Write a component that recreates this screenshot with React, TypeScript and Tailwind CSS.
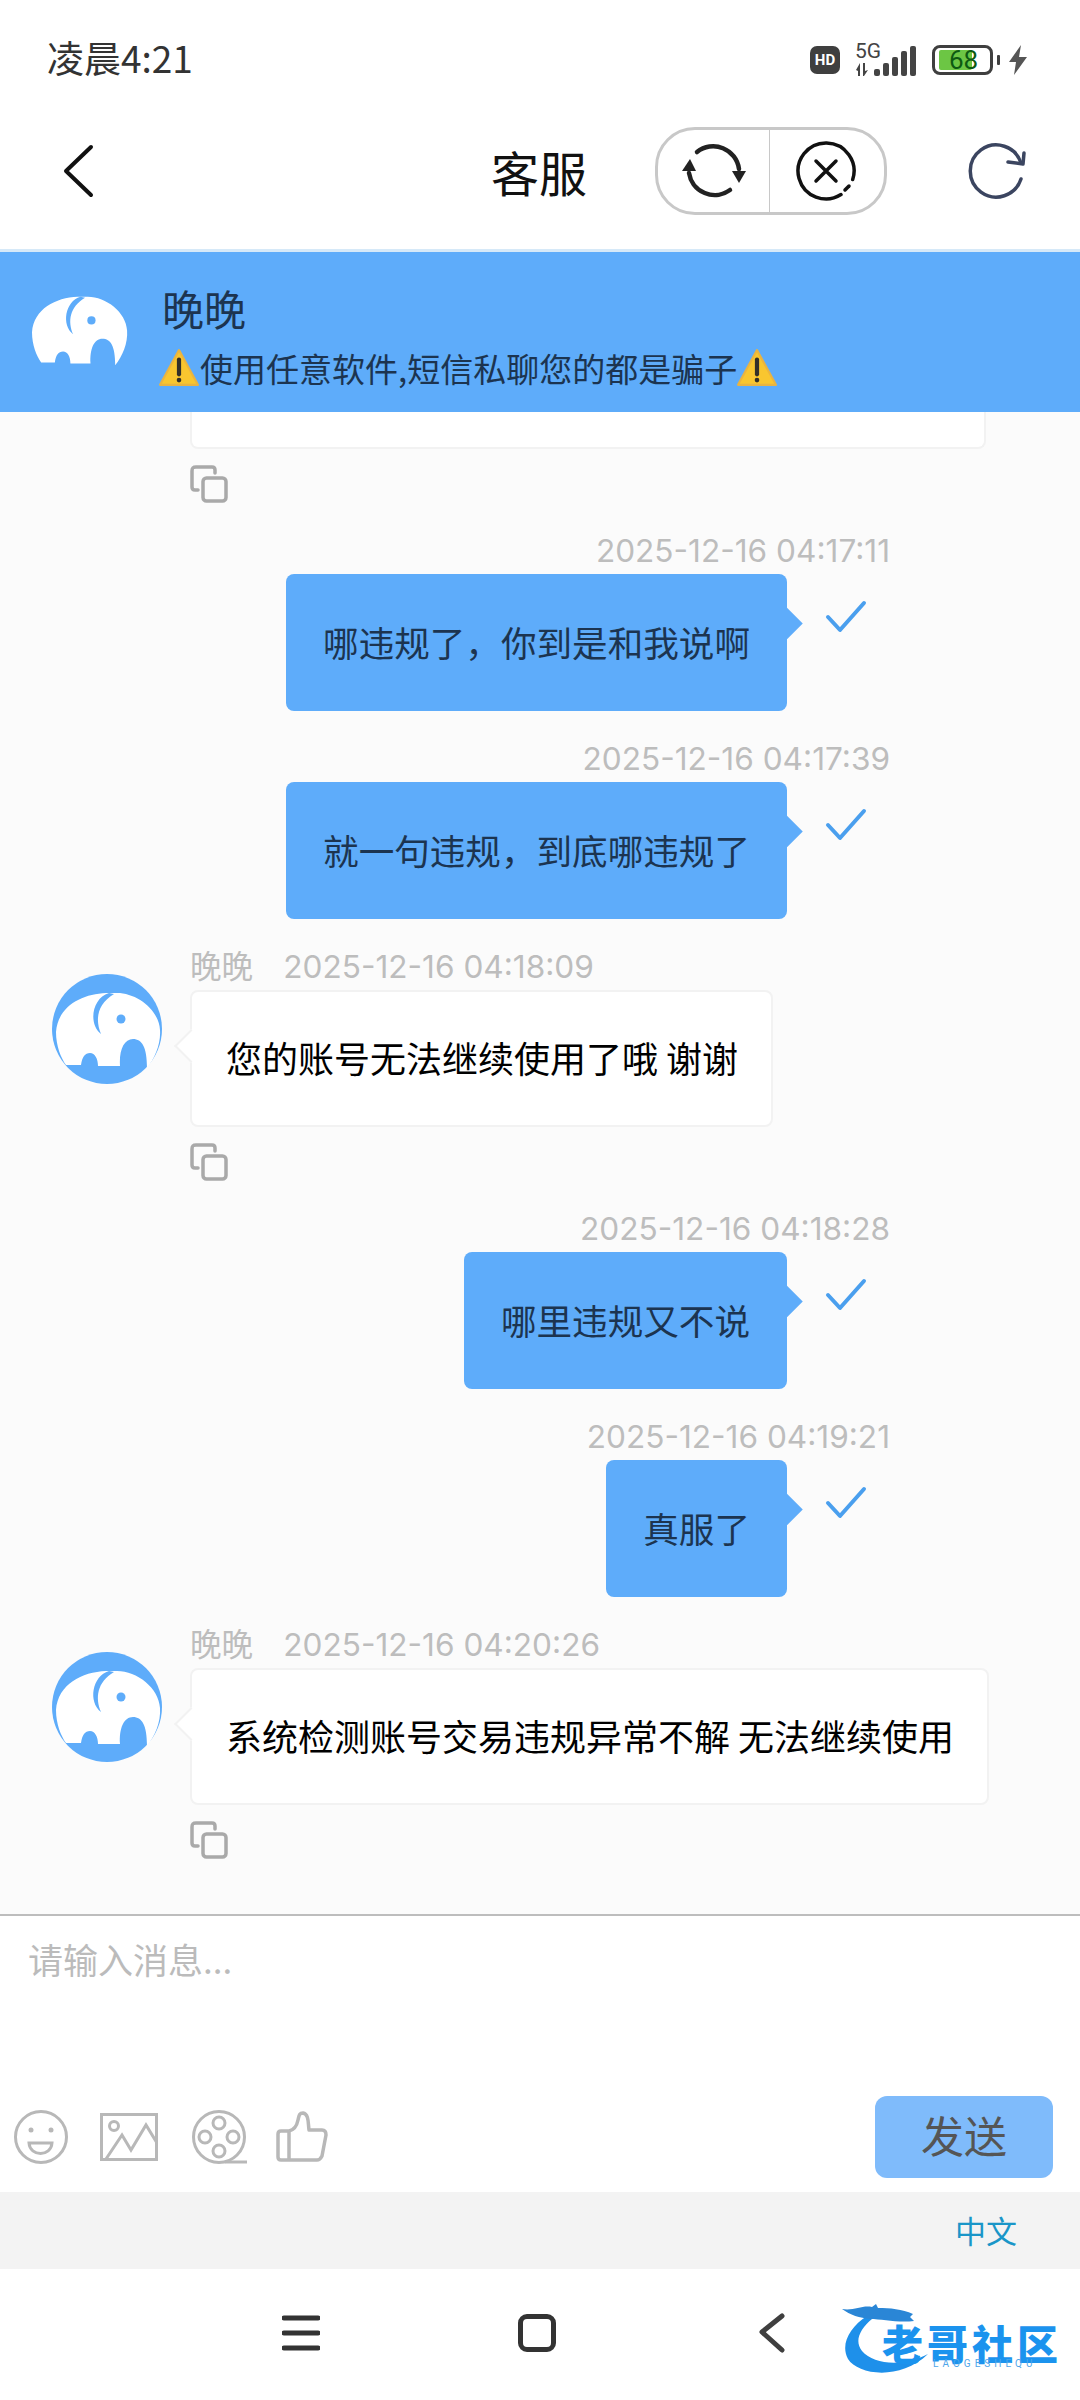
import { FC } from 'react';

const cjk = "font-['Noto_Sans_CJK_SC',sans-serif]";
const stamp = "font-['Inter','Noto_Sans_CJK_SC',sans-serif] text-[31.6px] leading-[32px] text-[#bdbdbd]";

const ElephantBody = () => (
  <path d="M54 19C30 20 6 32 4 58C4 72 9 84 14 91L29 91C30 83 33 79 38 79C43 79 46 85 46 92L68 92C67 76 72 65 81 65C90 65 95 73 95 94C103 84 109 70 108 56C107 36 85 19 65 19Z" fill="#fff" />
);

const ElephantFace = () => (
  <>
    <path d="M57 19C40 24 36 50 49 60C43 46 45 30 62 20Z" fill="#5eacfa" />
    <circle cx="69" cy="45" r="4.5" fill="#5eacfa" />
  </>
);

const Avatar = () => (
  <svg width="110" height="110" viewBox="0 0 110 110" className="shrink-0 mt-[23px]">
    <circle cx="55" cy="55" r="55" fill="#5eacfa" />
    <ElephantBody />
    <ElephantFace />
  </svg>
);

const Warning = () => (
  <svg width="40" height="40" viewBox="0 0 38 38" className="shrink-0">
    <path d="M19 2L37 35H1Z" fill="#f9c62f" stroke="#eab440" strokeWidth="2" strokeLinejoin="round" />
    <path d="M19 11V25" stroke="#33302a" strokeWidth="4" strokeLinecap="round" />
    <circle cx="19" cy="30.5" r="2.2" fill="#33302a" />
  </svg>
);

const Copy = () => (
  <svg width="38" height="38" viewBox="0 0 38 38" fill="none" stroke="#a9a9a9" strokeWidth="3.5" className="mt-[16px] block">
    <path d="M8 25H5C3 25 2 24 2 22V6C2 3 3 2 6 2H22C24 2 25 3 25 5V8" strokeLinecap="round" />
    <rect x="13" y="13" width="23" height="23" rx="3.5" />
  </svg>
);

const Right: FC<{ time: string; text: string }> = ({ time, text }) => (
  <div className="flex flex-col items-end mt-[32px] pr-[190px]">
    <div className={stamp}>{time}</div>
    <div className="flex mt-[7px]">
      <div className="relative bg-[#5eacfa] rounded-[8px] px-[37px] pt-[45px] pb-[47px] text-[35.6px] leading-[45px] text-[#1c3450] whitespace-nowrap">
        {text}
        <div className="absolute right-[-11px] top-[38px] w-[23px] h-[23px] rotate-45 bg-[#5eacfa]" />
      </div>
      <div className="w-[103px] pl-[38px] pt-[26px]">
        <svg width="42" height="34" viewBox="0 0 42 34" fill="none" stroke="#4a9fee" strokeWidth="4" strokeLinecap="round" strokeLinejoin="round">
          <path d="M3 17L15 30L39 3" />
        </svg>
      </div>
    </div>
  </div>
);

const Left: FC<{ time: string; text: string }> = ({ time, text }) => (
  <div className="flex mt-[32px] pl-[52px] gap-[28px]">
    <Avatar />
    <div className="flex flex-col items-start">
      <div className={`${stamp} flex gap-[30px]`}>
        <span>晚晚</span>
        <span>{time}</span>
      </div>
      <div className="relative mt-[7px] bg-white border-2 border-[#f2f2f2] rounded-[8px] pl-[34px] pr-[33px] pt-[43px] pb-[45px] text-[36px] leading-[45px] text-black whitespace-nowrap">
        {text}
        <div className="absolute left-[-13px] top-[42px] w-[24px] h-[24px] rotate-45 bg-white border-l-2 border-b-2 border-[#f2f2f2]" />
      </div>
      <Copy />
    </div>
  </div>
);

export default function App() {
  return (
    <div className={`w-[1080px] h-[2400px] bg-white overflow-hidden flex flex-col ${cjk}`}>
      {/* status bar */}
      <div className="h-[110px] flex items-start pt-[38px] shrink-0 relative">
        <span className="ml-[47px] text-[37px] leading-[38px] text-[#333]">凌晨4:21</span>
        <div className="ml-auto flex items-center mt-[7px] mr-[52px]">
          <div className="w-[30px] h-[28px] rounded-[7px] bg-[#3f3f3f] text-white text-[15px] font-bold flex items-center justify-center font-['Roboto',sans-serif]">HD</div>
          <div className="ml-[15px] relative w-[66px] h-[30px]">
            <span className="absolute left-0 top-[-3px] text-[21px] leading-[18px] text-[#444] font-['Roboto',sans-serif]">5G</span>
            <svg width="66" height="32" viewBox="0 0 66 32" className="absolute left-0 top-0" fill="#444">
              <path d="M1 25L5 18V31H3V26ZM8 18H10V26L13 25L9 31H8Z" />
              <rect x="19" y="24" width="6" height="7" rx="2" />
              <rect x="28" y="18" width="6" height="13" rx="2" />
              <rect x="37" y="12" width="6" height="19" rx="2" />
              <rect x="46" y="6" width="6" height="25" rx="2" />
              <rect x="55" y="1" width="6" height="30" rx="2" />
            </svg>
          </div>
          <div className="ml-[11px] relative w-[61px] h-[30px] border-[3px] border-[#3f3f3f] rounded-[8px] flex items-center">
            <div className="ml-[4px] w-[33px] h-[20px] rounded-[2px] bg-[#6cc644]" />
            <span className="absolute left-[14px] top-[-3px] text-[26px] leading-[30px] text-[#0d5a12] font-['Roboto',sans-serif]">68</span>
          </div>
          <div className="ml-[4px] w-[3px] h-[10px] rounded-[1px] bg-[#3f3f3f]" />
          <svg width="20" height="30" viewBox="0 0 20 30" fill="#555" className="ml-[8px]">
            <path d="M13 0L1 17H8L6 30L19 12H11Z" />
          </svg>
        </div>
      </div>

      {/* header */}
      <div className="h-[142px] shrink-0 border-b-[3px] border-[#d6e9f8] flex items-center pb-[17px]">
        <svg width="36" height="54" viewBox="0 0 36 54" fill="none" stroke="#111" strokeWidth="4" strokeLinecap="round" strokeLinejoin="round" className="ml-[60px]">
          <path d="M31 3L6 27L31 51" />
        </svg>
        <span className="ml-[395px] w-[96px] text-[48px] leading-[60px] text-[#111] whitespace-nowrap">客服</span>
        <div className="ml-[68px] w-[232px] h-[88px] rounded-[40px] border-[3px] border-[#c8c8c8] flex">
          <div className="w-[112px] border-r border-[#c8c8c8] flex items-center justify-center">
            <svg width="68" height="68" viewBox="0 0 68 68" fill="none" stroke="#222" strokeWidth="4.5" strokeLinecap="round">
              <path d="M17 15A26 26 0 0 1 59 32" />
              <path d="M50 53A26 26 0 0 1 9 36" />
              <path d="M52 34H66L59 46Z" fill="#222" stroke="none" />
              <path d="M2 34H16L10 22Z" fill="#222" stroke="none" />
            </svg>
          </div>
          <div className="flex-1 flex items-center justify-center pr-[2px]">
            <svg width="64" height="64" viewBox="0 0 64 64" fill="none" stroke="#111" strokeWidth="3.5" strokeLinecap="round">
              <path d="M58.7 40.5A28 28 0 1 0 47 55.6" />
              <path d="M51 51L55 47" />
              <path d="M22 22L42 42M42 22L22 42" />
            </svg>
          </div>
        </div>
        <svg width="64" height="64" viewBox="0 0 64 64" fill="none" stroke="#3b4560" strokeWidth="3.5" strokeLinecap="round" strokeLinejoin="round" className="ml-[77px]">
          <path d="M57 24A26 26 0 1 0 57 40" />
          <path d="M60 14L59 25L44 23" />
        </svg>
      </div>

      {/* banner */}
      <div className="h-[160px] shrink-0 bg-[#5eacfa] flex items-center pl-[32px]">
        <svg width="96" height="70" viewBox="4 19 105 75" className="mt-[-2px]">
          <ElephantBody />
          <ElephantFace />
        </svg>
        <div className="ml-[34px] text-[#1c3450] mt-[8px]">
          <div className="text-[42px] leading-[50px]">晚晚</div>
          <div className="mt-[13px] flex items-center text-[33px] leading-[44px] whitespace-nowrap ml-[-3px]">
            <Warning />
            <span className="ml-[1px]">使用任意软件,短信私聊您的都是骗子</span>
            <Warning />
          </div>
        </div>
      </div>

      {/* messages */}
      <div className="h-[1502px] shrink-0 bg-[#fbfbfb] overflow-hidden">
        <div className="ml-[190px] w-[796px] h-[37px] bg-white border-2 border-t-0 border-[#f2f2f2] rounded-b-[8px]" />
        <div className="ml-[190px]">
          <Copy />
        </div>
        <Right time="2025-12-16 04:17:11" text="哪违规了，你到是和我说啊" />
        <Right time="2025-12-16 04:17:39" text="就一句违规，到底哪违规了" />
        <Left time="2025-12-16 04:18:09" text="您的账号无法继续使用了哦 谢谢" />
        <Right time="2025-12-16 04:18:28" text="哪里违规又不说" />
        <Right time="2025-12-16 04:19:21" text="真服了" />
        <Left time="2025-12-16 04:20:26" text="系统检测账号交易违规异常不解 无法继续使用" />
      </div>

      {/* input */}
      <div className="h-[278px] shrink-0 border-t-2 border-[#bdbdbd] flex flex-col justify-between pb-[14px]">
        <div className="pl-[28px] pt-[23px] text-[35px] leading-[40px] text-[#bbbbbb]">请输入消息...</div>
        <div className="flex items-center pl-[14px] pr-[27px]">
          <svg width="54" height="54" viewBox="0 0 54 54" fill="none" stroke="#b8b8b8" strokeWidth="3">
            <circle cx="27" cy="27" r="25.5" />
            <circle cx="17" cy="20" r="2.5" fill="#b8b8b8" stroke="none" />
            <circle cx="37" cy="20" r="2.5" fill="#b8b8b8" stroke="none" />
            <path d="M15 33H38C37 47 16 47 15 33Z" />
          </svg>
          <svg width="58" height="48" viewBox="0 0 58 48" fill="none" stroke="#b8b8b8" strokeWidth="3" className="ml-[32px]">
            <rect x="1.5" y="1.5" width="55" height="45" />
            <circle cx="14" cy="13" r="4.5" />
            <path d="M6 46L22 22L31 37L46 12L57 30" />
          </svg>
          <svg width="56" height="54" viewBox="0 0 56 54" fill="none" stroke="#b8b8b8" strokeWidth="3" className="ml-[34px]">
            <circle cx="27" cy="27" r="25.5" />
            <circle cx="27" cy="13" r="6" />
            <circle cx="27" cy="41" r="6" />
            <circle cx="13" cy="27" r="6" />
            <circle cx="41" cy="27" r="6" />
            <path d="M33 52H55" />
          </svg>
          <svg width="52" height="52" viewBox="0 0 52 52" fill="none" stroke="#b8b8b8" strokeWidth="3.5" strokeLinejoin="round" className="ml-[28px]">
            <path d="M13 20H5C3 20 2 21 2 23V46C2 48 3 49 5 49H41C44 49 45 47 46 45L50 24C50 21 49 19 46 19H33C32 12 33 3 27 2C23 2 23 5 22 9C21 14 18 19 13 20ZM13 20V49" />
          </svg>
          <div className="ml-auto w-[178px] h-[82px] rounded-[12px] bg-[#7fbbfb] text-[43px] leading-[76px] pb-[7px] text-[#555] flex items-center justify-center">发送</div>
        </div>
      </div>

      {/* language bar */}
      <div className="h-[77px] shrink-0 bg-[#f3f3f3] flex items-center justify-end pr-[63px] text-[31px] text-[#1a96c8]">中文</div>

      {/* nav */}
      <div className="flex-1 relative flex items-center pb-[4px]">
        <svg width="38" height="38" viewBox="0 0 38 38" stroke="#333" strokeWidth="5" strokeLinecap="round" className="ml-[282px]">
          <path d="M2 4H36M2 19H36M2 34H36" />
        </svg>
        <div className="ml-[198px] w-[38px] h-[38px] border-[5px] border-[#333] rounded-[9px]" />
        <svg width="26" height="40" viewBox="0 0 26 40" fill="none" stroke="#3f3f3f" strokeWidth="5" strokeLinecap="round" strokeLinejoin="round" className="ml-[203px]">
          <path d="M23 3L3 19L23 37" />
        </svg>

        {/* watermark */}
        <div className="absolute left-[842px] top-[30px] w-[225px] h-[84px]">
          <svg width="110" height="84" viewBox="0 0 110 84" className="absolute left-0 top-0">
            <path d="M25 17C8 28 -2 45 6 60C16 76 58 82 86 55C62 68 32 66 20 52C12 42 18 30 30 20Z" fill="#1e90ea" />
            <path d="M0 10C12 12 20 6 30 8L34 5L36 9C48 9 60 10 71 15L68 18L72 22C56 24 40 20 28 20C18 19 8 16 0 10Z" fill="#2a86d6" />
          </svg>
          <span className="absolute left-[40px] top-[27px] text-[41px] leading-[32px] tracking-[4px] font-black text-[#1b93ee] whitespace-nowrap">老哥社区</span>
          <span className="absolute left-[91px] top-[60px] text-[10px] leading-[10px] tracking-[4px] text-[#4fa6ea] font-['Roboto',sans-serif]">LAOGESHEQU</span>
        </div>
      </div>
    </div>
  );
}
